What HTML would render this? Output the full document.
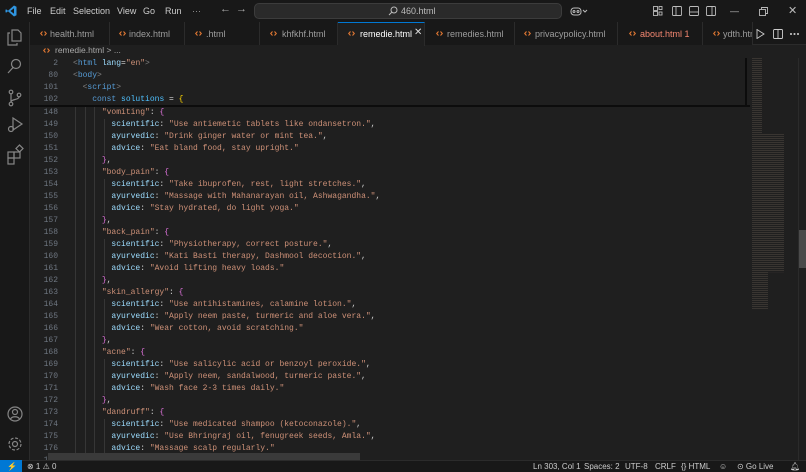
<!DOCTYPE html>
<html><head><meta charset="utf-8"><style>
*{margin:0;padding:0;box-sizing:border-box}
body{width:806px;height:472px;overflow:hidden;background:#1f1f1f;font-family:"Liberation Sans",sans-serif;color:#ccc;position:relative}
.abs{position:absolute}
#title{left:0;top:0;width:806px;height:22px;background:#181818;font-size:9px;color:#ccc}
#title span{position:absolute;top:6px}
#search{left:254px;top:3px;width:308px;height:16px;background:#2a2a2a;border:1px solid #3c3c3c;border-radius:5px}
#act{left:0;top:22px;width:30px;height:438px;background:#181818;border-right:1px solid #2b2b2b}
#tabs{left:30px;top:22px;width:776px;height:23px;background:#181818;border-bottom:1px solid #2b2b2b}
.tab{position:absolute;top:0;height:23px;border-right:1px solid #2b2b2b;font-size:9px;color:#9d9d9d;background:#181818}
.tab i{position:absolute;top:9px;width:7px;height:5px}
.tab b{position:absolute;top:7px;font-weight:normal;white-space:nowrap}
#bc{left:30px;top:45px;font-size:8.5px;color:#a9a9a9}
#code{left:30px;top:58px;width:720px;height:402px;overflow:hidden;font-family:"Liberation Mono",monospace;font-size:8px}
.l{position:absolute;left:0;height:12px;line-height:12px;white-space:pre;width:720px}
.n{position:absolute;left:0;width:28px;text-align:right;color:#6e7681}
.c{position:absolute;left:43px;color:#d4d4d4}
.k{color:#9cdcfe}.s{color:#ce9178}.t{color:#569cd6}.g{color:#808080}.p{color:#da70d6}.y{color:#ffd700}.v{color:#4fc1ff}.b{color:#179fff}
#status{left:0;top:460px;width:806px;height:12px;background:#181818;border-top:1px solid #2b2b2b;font-size:8px;color:#ccc}
#status span{position:absolute;top:1px}
.ig{position:absolute;top:0;width:1px;height:12px;background:#363636}
</style></head><body>
<svg width="0" height="0" style="position:absolute"><defs><symbol id="ti" viewBox="0 0 7 5"><path d="M2.5 0.5L0.7 2.5L2.5 4.5M4.5 0.5L6.3 2.5L4.5 4.5" fill="none" stroke="#e37933" stroke-width="1.1"/></symbol></defs></svg>
<div id="title" class="abs">
<svg class="abs" style="left:5px;top:5px" width="12" height="12" viewBox="0 0 12 12"><path d="M9 0.5L11.5 1.7V10.3L9 11.5L3 6.2L1.2 7.6L0.5 7.2V4.8L1.2 4.4L3 5.8L9 0.5ZM9 3.3L5.4 6L9 8.7Z" fill="#2f95e0"/></svg>
<span style="left:27px">File</span><span style="left:50px">Edit</span><span style="left:73px">Selection</span><span style="left:117px">View</span><span style="left:143px">Go</span><span style="left:165px">Run</span><span style="left:192px;color:#999">···</span>
<span style="left:220px;font-size:11px;top:3px;color:#aaa">←</span><span style="left:236px;font-size:11px;top:3px;color:#aaa">→</span>
<div id="search" class="abs"></div>
<svg class="abs" style="left:388px;top:6px" width="10" height="10" viewBox="0 0 10 10"><circle cx="6" cy="4" r="3" stroke="#bbb" fill="none"/><path d="M4 6L1 9" stroke="#bbb"/></svg>
<span style="left:401px;color:#bbb">460.html</span>
<svg class="abs" style="left:570px;top:6px" width="18" height="10" fill="none" stroke="#bbb" stroke-width="1"><rect x="1" y="2" width="10" height="7" rx="3"/><circle cx="4" cy="5.5" r="1"/><circle cx="8" cy="5.5" r="1"/><path d="M13 4L15 6L17 4"/></svg>
<svg class="abs" style="left:653px;top:6px" width="70" height="10" viewBox="0 0 70 10" fill="none" stroke="#bbb" stroke-width="0.9"><rect x="0.5" y="0.5" width="4" height="4"/><rect x="0.5" y="5.5" width="4" height="4"/><rect x="6" y="0.5" width="3" height="3"/><rect x="6" y="6" width="3" height="3"/><rect x="19.5" y="0.5" width="9" height="9" rx="1"/><path d="M23 0.5V9.5"/><rect x="36.5" y="0.5" width="9" height="9" rx="1"/><path d="M36.5 6H45.5"/><rect x="53.5" y="0.5" width="9" height="9" rx="1"/><path d="M59 0.5V9.5"/></svg>
<span style="left:730px;color:#bbb">—</span>
<svg class="abs" style="left:759px;top:7px" width="9" height="9" fill="none" stroke="#bbb" stroke-width="0.9"><rect x="0.5" y="2.5" width="6" height="6"/><path d="M2.5 2.5V0.5H8.5V6.5H6.5"/></svg>
<span style="left:788px;top:4px;font-size:11px;color:#bbb">✕</span>
</div>
<div id="act" class="abs">
<svg class="abs" style="left:6px;top:6px" width="18" height="160" fill="none" stroke="#858585" stroke-width="1.2">
<path d="M6 2H12L15 5V13H6Z M4 5H2V17H11V15"/>
<circle cx="10" cy="36" r="4.5"/><path d="M7 39.5L2 45"/>
<circle cx="5" cy="64" r="1.8"/><circle cx="5" cy="76" r="1.8"/><circle cx="13" cy="67" r="1.8"/><path d="M5 66V74M13 69C13 72 5 71 5 74"/>
<path d="M7 90L16 96L7 102Z"/><circle cx="5" cy="101" r="2.5"/>
<rect x="2" y="124" width="6" height="6"/><rect x="8" y="124" width="6" height="6"/><rect x="2" y="130" width="6" height="6"/><rect x="11" y="118" width="5" height="5" transform="rotate(45 13.5 120.5)"/>
</svg>
<svg class="abs" style="left:6px;top:382px" width="18" height="50" fill="none" stroke="#858585" stroke-width="1.2"><circle cx="9" cy="10" r="7"/><circle cx="9" cy="8" r="2.5"/><path d="M4.5 15C6 12 12 12 13.5 15"/><circle cx="9" cy="40" r="2.5"/><circle cx="9" cy="40" r="6" stroke-dasharray="3 1.7"/></svg>
</div>
<div id="tabs" class="abs">
<div class="tab" style="left:0;width:80px"><svg class="abs" style="left:10px;top:9px" width="7" height="5"><use href="#ti"/></svg><b style="left:20px">health.html</b></div>
<div class="tab" style="left:80px;width:75px"><svg class="abs" style="left:9px;top:9px" width="7" height="5"><use href="#ti"/></svg><b style="left:19px">index.html</b></div>
<div class="tab" style="left:155px;width:75px"><svg class="abs" style="left:10px;top:9px" width="7" height="5"><use href="#ti"/></svg><b style="left:21px">.html</b></div>
<div class="tab" style="left:230px;width:78px"><svg class="abs" style="left:10px;top:9px" width="7" height="5"><use href="#ti"/></svg><b style="left:22px">khfkhf.html</b></div>
<div class="tab" style="left:308px;width:87px;background:#1f1f1f;border-top:1px solid #0078d4;height:24px"><svg class="abs" style="left:10px;top:8px" width="7" height="5"><use href="#ti"/></svg><b style="left:22px;color:#fff;top:6px">remedie.html</b><b style="left:76px;color:#ddd;top:4px;font-size:10px">✕</b></div>
<div class="tab" style="left:395px;width:90px"><svg class="abs" style="left:11px;top:9px" width="7" height="5"><use href="#ti"/></svg><b style="left:22px">remedies.html</b></div>
<div class="tab" style="left:485px;width:103px"><svg class="abs" style="left:9px;top:9px" width="7" height="5"><use href="#ti"/></svg><b style="left:20px">privacypolicy.html</b></div>
<div class="tab" style="left:588px;width:85px"><svg class="abs" style="left:11px;top:9px" width="7" height="5"><use href="#ti"/></svg><b style="left:22px;color:#f48771">about.html 1</b></div>
<div class="tab" style="left:673px;width:50px;overflow:hidden"><svg class="abs" style="left:10px;top:9px" width="7" height="5"><use href="#ti"/></svg><b style="left:20px">ydth.html</b></div>
<svg class="abs" style="left:726px;top:7px" width="50" height="10" fill="none" stroke="#ccc" stroke-width="0.9"><path d="M1 0.5L8 5L1 9.5Z"/><rect x="17.5" y="0.5" width="9" height="9" rx="1"/><path d="M22 0.5V9.5"/><circle cx="35" cy="5" r="0.6" fill="#ccc"/><circle cx="38.5" cy="5" r="0.6" fill="#ccc"/><circle cx="42" cy="5" r="0.6" fill="#ccc"/></svg>
</div>
<div id="bc" class="abs"><svg class="abs" style="left:13px;top:3px" width="7" height="5"><use href="#ti"/></svg><span style="position:absolute;left:25px;top:0;white-space:nowrap">remedie.html &gt; ...</span></div>
<div id="code" class="abs">
<div class="l" style="top:0"><span class="n">2</span><span class="c"><span class="g">&lt;</span><span class="t">html</span> <span class="k">lang</span>=<span class="s">"en"</span><span class="g">&gt;</span></span></div>
<div class="l" style="top:12px"><span class="n">80</span><span class="c"><span class="g">&lt;</span><span class="t">body</span><span class="g">&gt;</span></span></div>
<div class="l" style="top:24px"><span class="n">101</span><span class="c">  <span class="g">&lt;</span><span class="t">script</span><span class="g">&gt;</span></span></div>
<div class="l" style="top:36px"><span class="n">102</span><span class="c">    <span class="t">const</span> <span class="v">solutions</span> = <span class="y">{</span></span></div>
<div class="abs" style="left:0;top:47px;width:720px;height:2px;background:#0c0c0c"></div>
<div id="lines"></div>
</div>
<div class="abs" style="left:48px;top:453px;width:312px;height:7px;background:#3a3a3a"></div>
<div class="abs" style="left:745px;top:58px;width:2px;height:48px;background:#0c0c0c"></div>
<div class="abs" style="left:798px;top:58px;width:1px;height:402px;background:#2b2b2b"></div>
<div class="abs" style="left:799px;top:230px;width:7px;height:38px;background:#4a4a4a"></div>
<div class="abs" style="left:752px;top:58px;width:40px;height:252px;background:repeating-linear-gradient(180deg,rgba(160,140,120,.2) 0 1px,transparent 1px 2px);clip-path:polygon(0 0,25% 0,25% 30%,80% 30%,80% 85%,40% 85%,40% 100%,0 100%)"></div>
<div id="status" class="abs">
<div class="abs" style="left:0;top:-1px;width:22px;height:12px;background:#0078d4"></div>
<span style="left:7px;color:#fff">⚡</span>
<span style="left:27px">⊗ 1 ⚠ 0</span>
<span style="left:533px">Ln 303, Col 1</span><span style="left:584px">Spaces: 2</span><span style="left:625px">UTF-8</span><span style="left:655px">CRLF</span><span style="left:681px">{} HTML</span><span style="left:719px">☺</span><span style="left:737px">⊙ Go Live</span><span style="left:790px">🔔︎</span>
</div>
<script>
var L=[
[148,6,'<span class="s">"vomiting"</span>: <span class="p">{</span>'],
[149,8,'<span class="k">scientific</span>: <span class="s">"Use antiemetic tablets like ondansetron."</span>,'],
[150,8,'<span class="k">ayurvedic</span>: <span class="s">"Drink ginger water or mint tea."</span>,'],
[151,8,'<span class="k">advice</span>: <span class="s">"Eat bland food, stay upright."</span>'],
[152,6,'<span class="p">}</span>,'],
[153,6,'<span class="s">"body_pain"</span>: <span class="p">{</span>'],
[154,8,'<span class="k">scientific</span>: <span class="s">"Take ibuprofen, rest, light stretches."</span>,'],
[155,8,'<span class="k">ayurvedic</span>: <span class="s">"Massage with Mahanarayan oil, Ashwagandha."</span>,'],
[156,8,'<span class="k">advice</span>: <span class="s">"Stay hydrated, do light yoga."</span>'],
[157,6,'<span class="p">}</span>,'],
[158,6,'<span class="s">"back_pain"</span>: <span class="p">{</span>'],
[159,8,'<span class="k">scientific</span>: <span class="s">"Physiotherapy, correct posture."</span>,'],
[160,8,'<span class="k">ayurvedic</span>: <span class="s">"Kati Basti therapy, Dashmool decoction."</span>,'],
[161,8,'<span class="k">advice</span>: <span class="s">"Avoid lifting heavy loads."</span>'],
[162,6,'<span class="p">}</span>,'],
[163,6,'<span class="s">"skin_allergy"</span>: <span class="p">{</span>'],
[164,8,'<span class="k">scientific</span>: <span class="s">"Use antihistamines, calamine lotion."</span>,'],
[165,8,'<span class="k">ayurvedic</span>: <span class="s">"Apply neem paste, turmeric and aloe vera."</span>,'],
[166,8,'<span class="k">advice</span>: <span class="s">"Wear cotton, avoid scratching."</span>'],
[167,6,'<span class="p">}</span>,'],
[168,6,'<span class="s">"acne"</span>: <span class="p">{</span>'],
[169,8,'<span class="k">scientific</span>: <span class="s">"Use salicylic acid or benzoyl peroxide."</span>,'],
[170,8,'<span class="k">ayurvedic</span>: <span class="s">"Apply neem, sandalwood, turmeric paste."</span>,'],
[171,8,'<span class="k">advice</span>: <span class="s">"Wash face 2-3 times daily."</span>'],
[172,6,'<span class="p">}</span>,'],
[173,6,'<span class="s">"dandruff"</span>: <span class="p">{</span>'],
[174,8,'<span class="k">scientific</span>: <span class="s">"Use medicated shampoo (ketoconazole)."</span>,'],
[175,8,'<span class="k">ayurvedic</span>: <span class="s">"Use Bhringraj oil, fenugreek seeds, Amla."</span>,'],
[176,8,'<span class="k">advice</span>: <span class="s">"Massage scalp regularly."</span>'],
[177,6,'<span class="p">}</span>,']];
var h='';
L.forEach(function(r,i){
 var g='';for(var j=0;j<r[1];j+=2)g+='<span class="ig" style="left:'+(45+j*4.8)+'px"></span>';
 h+='<div class="l" style="top:'+(49+i*12)+'px">'+g+'<span class="n">'+r[0]+'</span><span class="c">'+' '.repeat(r[1])+r[2]+'</span></div>';
});
document.getElementById('lines').innerHTML=h;
</script>
</body></html>
